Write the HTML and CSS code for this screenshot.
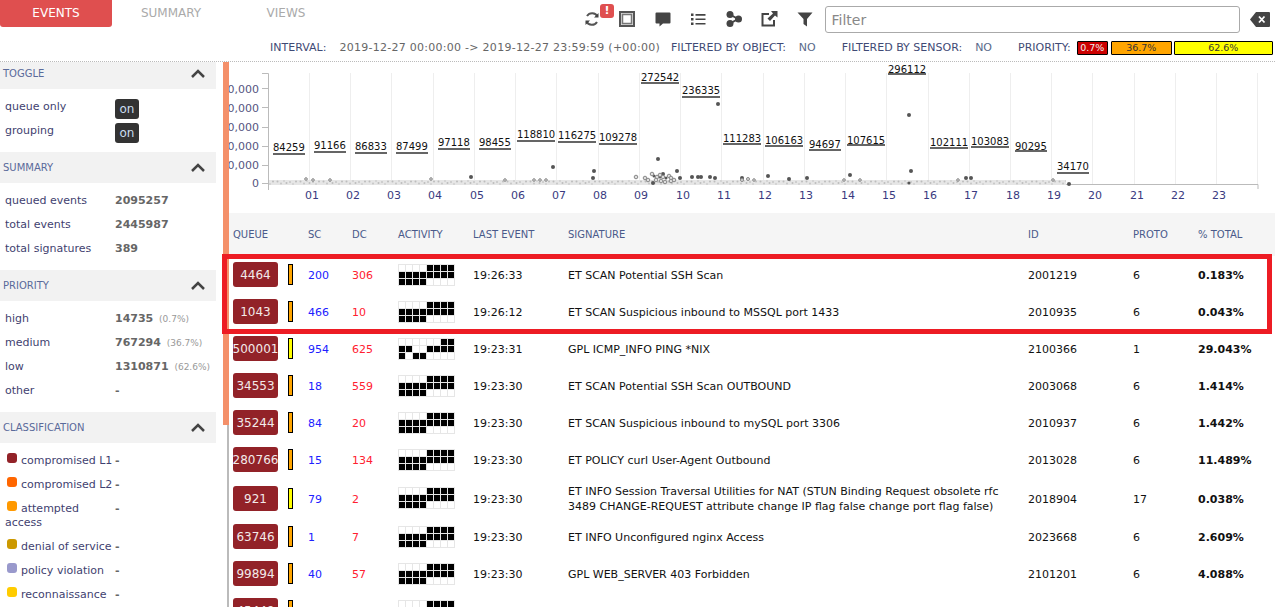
FILE: index.html
```html
<!DOCTYPE html>
<html lang="en">
<head>
<meta charset="utf-8">
<title>Events</title>
<link rel="stylesheet" href="styles.css">
</head>
<body>
<svg class="defs" aria-hidden="true">
  <defs>
    <symbol id="act-a" viewBox="0 0 57 22">
      <rect class="act-bg" width="57" height="22"/>
      <path class="act-empty" d="M1 4H57M1 11H57M1 18H57"/>
      <path class="act-full" d="M29 4H57M1 11H57M1 18H29"/>
    </symbol>
    <symbol id="act-b" viewBox="0 0 57 22">
      <rect class="act-bg" width="57" height="22"/>
      <path class="act-empty" d="M1 4H57M1 11H57M1 18H57"/>
      <path class="act-full" d="M43 4H57M1 11H15M29 11H57M1 18H8M15 18H29"/>
    </symbol>
    <pattern id="noise" width="23" height="5" patternUnits="userSpaceOnUse">
      <rect width="23" height="5" fill="#e6e6e6"/>
      <circle cx="1.500" cy="1.500" r="1" fill="#bdbdbd"/>
      <circle cx="5" cy="3.500" r="1" fill="#c6c6c6"/>
      <circle cx="8" cy="1" r="1" fill="#d0d0d0"/>
      <circle cx="10.500" cy="3" r="1" fill="#bdbdbd"/>
      <circle cx="14" cy="2" r="1" fill="#c6c6c6"/>
      <circle cx="17" cy="4" r="1" fill="#d0d0d0"/>
      <circle cx="20" cy="1.500" r="1" fill="#bdbdbd"/>
    </pattern>
  </defs>
</svg>
<div class="app">
  <header class="top">
    <div class="bar">
      <nav class="tabs">
        <a class="tab tab-active">EVENTS</a>
        <a class="tab tab-summary">SUMMARY</a>
        <a class="tab">VIEWS</a>
      </nav>
      <div class="tools">
        <span class="tool tool-badged">
          <svg class="ico" viewBox="0 0 18 18"><path class="ico-line" d="M14.500 6.500A6 6 0 0 0 4 6M3.500 11.500A6 6 0 0 0 14 12"/><path class="ico-fill" d="M15.500 3v4.500H11zM2.500 15v-4.500H7z"/></svg>
          <span class="alert">!</span>
        </span>
        <span class="tool"><svg class="ico" viewBox="0 0 18 18"><rect class="ico-frame" x="2" y="2" width="14" height="14"/><rect class="ico-frame-in" x="4.500" y="4.500" width="9" height="9"/></svg></span>
        <span class="tool"><svg class="ico" viewBox="0 0 18 18"><path class="ico-fill" d="M2.500 2.500h13a1 1 0 0 1 1 1v9a1 1 0 0 1-1 1H9l-3.500 3v-3H2.500a1 1 0 0 1-1-1v-9a1 1 0 0 1 1-1z"/></svg></span>
        <span class="tool"><svg class="ico" viewBox="0 0 18 18"><path class="ico-fill" d="M2 3.500h2.500v2.500H2zM2 8h2.500v2.500H2zM2 12.500h2.500V15H2zM6.500 4h10v1.700h-10zM6.500 8.400h10v1.700h-10zM6.500 12.900h10v1.700h-10z"/></svg></span>
        <span class="tool"><svg class="ico" viewBox="0 0 18 18"><path class="ico-bold" d="M5 4.500L13 9L5 13.500"/><circle class="ico-fill" cx="5" cy="4.500" r="3.500"/><circle class="ico-fill" cx="5" cy="13.500" r="3.500"/><circle class="ico-fill" cx="13.500" cy="9" r="3.500"/></svg></span>
        <span class="tool"><svg class="ico" viewBox="0 0 18 18"><path class="ico-bold" d="M9 4H2.500v11.500H14V10"/><path class="ico-fill" d="M11 1h6.500v6.500L15 5.500l-5 5.500-2.500-2.500L13 3.500z"/></svg></span>
        <span class="tool"><svg class="ico" viewBox="0 0 18 18"><path class="ico-fill" d="M1.500 2.500h15L11 9v7.500L7.500 14V9z"/></svg></span>
      </div>
      <input class="filter" type="text" placeholder="Filter">
      <svg class="clear" viewBox="0 0 20 15"><path class="clear-body" d="M6 0h13a1 1 0 0 1 1 1v13a1 1 0 0 1-1 1H6L0 7.500z"/><path class="clear-x" d="M9 4.500l5.500 6M14.500 4.500l-5.500 6"/></svg>
    </div>
    <div class="info">
      <span class="info-key">INTERVAL:</span>
      <span class="info-val">2019-12-27 00:00:00 -&gt; 2019-12-27 23:59:59 (+00:00)</span>
      <span class="info-key">FILTERED BY OBJECT:</span>
      <span class="info-no">NO</span>
      <span class="info-key">FILTERED BY SENSOR:</span>
      <span class="info-no">NO</span>
      <span class="info-key info-prio">PRIORITY:</span>
      <span class="prio prio-high">0.7%</span>
      <span class="prio prio-med">36.7%</span>
      <span class="prio prio-low">62.6%</span>
    </div>
  </header>

  <div class="main">
    <aside class="side">
      <section class="panel">
        <h3 class="panel-head panel-head-first">TOGGLE<svg class="chev" viewBox="0 0 14 9"><path d="M1 8L7 2L13 8"/></svg></h3>
        <div class="row row-switch"><span class="lab">queue only</span><span class="switch">on</span></div>
        <div class="row row-switch"><span class="lab">grouping</span><span class="switch">on</span></div>
      </section>
      <section class="panel">
        <h3 class="panel-head">SUMMARY<svg class="chev" viewBox="0 0 14 9"><path d="M1 8L7 2L13 8"/></svg></h3>
        <div class="row"><span class="lab">queued events</span><span class="val">2095257</span></div>
        <div class="row"><span class="lab">total events</span><span class="val">2445987</span></div>
        <div class="row"><span class="lab">total signatures</span><span class="val">389</span></div>
      </section>
      <section class="panel">
        <h3 class="panel-head">PRIORITY<svg class="chev" viewBox="0 0 14 9"><path d="M1 8L7 2L13 8"/></svg></h3>
        <div class="row"><span class="lab">high</span><span class="val">14735 <small class="pct">(0.7%)</small></span></div>
        <div class="row"><span class="lab">medium</span><span class="val">767294 <small class="pct">(36.7%)</small></span></div>
        <div class="row"><span class="lab">low</span><span class="val">1310871 <small class="pct">(62.6%)</small></span></div>
        <div class="row"><span class="lab">other</span><span class="val">-</span></div>
      </section>
      <section class="panel">
        <h3 class="panel-head">CLASSIFICATION<svg class="chev" viewBox="0 0 14 9"><path d="M1 8L7 2L13 8"/></svg></h3>
        <div class="row"><span class="lab"><i class="dot c1"></i>compromised L1</span><span class="val">-</span></div>
        <div class="row"><span class="lab"><i class="dot c2"></i>compromised L2</span><span class="val">-</span></div>
        <div class="row"><span class="lab"><i class="dot c3"></i>attempted access</span><span class="val">-</span></div>
        <div class="row"><span class="lab"><i class="dot c4"></i>denial of service</span><span class="val">-</span></div>
        <div class="row"><span class="lab"><i class="dot c5"></i>policy violation</span><span class="val">-</span></div>
        <div class="row"><span class="lab"><i class="dot c6"></i>reconnaissance</span><span class="val">-</span></div>
      </section>
    </aside>

    <div class="content">
      <div class="thumb"></div>
      <svg class="chart" viewBox="229 62 1046 151">
        <g class="grid">
          <path d="M309.500 73V184M350.500 73V184M391.500 73V184M433.500 73V184M474.500 73V184M515.500 73V184M556.500 73V184M598.500 73V184M639.500 73V184M680.500 73V184M721.500 73V184M763.500 73V184M804.500 73V184M845.500 73V184M886.500 73V184M928.500 73V184M969.500 73V184M1010.500 73V184M1051.500 73V184M1092.500 73V184M1134.500 73V184M1175.500 73V184M1216.500 73V184M1257.500 73V184"/>
        </g>
        <path class="axis" d="M262 73.500H268.500V190M262 88.500H268M262 107.500H268M262 127.500H268M262 146.500H268M262 165.500H268M262 183.500H268M268 184.500H1258V189"/>
        <g class="ytick">
          <text x="259" y="93">250,000</text>
          <text x="259" y="112">200,000</text>
          <text x="259" y="131">150,000</text>
          <text x="259" y="150">100,000</text>
          <text x="259" y="169">50,000</text>
          <text x="259" y="187">0</text>
        </g>
        <g class="xtick">
          <text x="305" y="199">01</text><text x="346" y="199">02</text><text x="387" y="199">03</text><text x="428" y="199">04</text><text x="470" y="199">05</text><text x="511" y="199">06</text><text x="552" y="199">07</text><text x="593" y="199">08</text><text x="634" y="199">09</text><text x="676" y="199">10</text><text x="717" y="199">11</text><text x="758" y="199">12</text><text x="799" y="199">13</text><text x="841" y="199">14</text><text x="882" y="199">15</text><text x="923" y="199">16</text><text x="964" y="199">17</text><text x="1006" y="199">18</text><text x="1047" y="199">19</text><text x="1088" y="199">20</text><text x="1130" y="199">21</text><text x="1171" y="199">22</text><text x="1212" y="199">23</text>
        </g>
        <rect class="noise" x="269" y="180" width="797" height="5"/>
        <g class="pts">
          <circle cx="471" cy="177" r="2"/><circle cx="553" cy="167" r="2"/><circle cx="594" cy="171" r="2"/><circle cx="593" cy="178" r="2"/><circle cx="658" cy="159" r="2"/><circle cx="718" cy="104" r="2"/><circle cx="677" cy="171" r="2"/><circle cx="680" cy="178" r="2"/><circle cx="909" cy="115" r="2"/><circle cx="911" cy="171" r="2"/><circle cx="768" cy="176" r="2"/><circle cx="789" cy="179" r="2"/><circle cx="807" cy="178" r="2"/><circle cx="850" cy="175" r="2"/><circle cx="1069" cy="184" r="2"/><circle cx="966" cy="178" r="2"/><circle cx="971" cy="178" r="2"/><circle cx="692" cy="177" r="2"/><circle cx="698" cy="177" r="2"/><circle cx="701" cy="177" r="2"/><circle cx="710" cy="177" r="2"/><circle cx="715" cy="178" r="2"/><circle cx="742" cy="178" r="2"/><circle cx="909" cy="183" r="1.500"/>
          <circle cx="653" cy="183" r="2"/><circle cx="663" cy="174" r="2"/><circle cx="654" cy="176" r="1.500"/><circle cx="660" cy="177" r="1.500"/><circle cx="666" cy="178" r="1.500"/>
        </g>
        <g class="pts-open">
          <circle cx="636" cy="177" r="1.800"/><circle cx="645" cy="178" r="1.800"/><circle cx="652" cy="174" r="1.800"/><circle cx="657" cy="177" r="1.800"/><circle cx="660" cy="175" r="1.800"/><circle cx="663" cy="177" r="1.800"/><circle cx="669" cy="176" r="1.800"/><circle cx="671" cy="178" r="1.800"/><circle cx="656" cy="180" r="1.800"/><circle cx="661" cy="181" r="1.800"/><circle cx="665" cy="182" r="1.800"/><circle cx="671" cy="181" r="1.800"/><circle cx="674" cy="180" r="1.800"/><circle cx="648" cy="180" r="1.800"/><circle cx="742" cy="180" r="1.500"/><circle cx="748" cy="179" r="1.500"/><circle cx="313" cy="180" r="1.300"/><circle cx="306" cy="179" r="1.300"/><circle cx="505" cy="180" r="1.300"/><circle cx="431" cy="179" r="1.300"/><circle cx="1053" cy="180" r="1.300"/><circle cx="844" cy="180" r="1.300"/><circle cx="330" cy="180" r="1.300"/><circle cx="534" cy="180" r="1.300"/><circle cx="540" cy="180" r="1.300"/><circle cx="546" cy="180" r="1.300"/><circle cx="754" cy="180" r="1.300"/><circle cx="958" cy="180" r="1.300"/><circle cx="860" cy="180" r="1.300"/>
        </g>
        <g class="lbl">
          <text x="273" y="151">84259</text><text x="314" y="149">91166</text><text x="355" y="150">86833</text><text x="396" y="150">87499</text><text x="438" y="146">97118</text><text x="479" y="146">98455</text><text x="517" y="138">118810</text><text x="558" y="139">116275</text><text x="599" y="141">109278</text><text x="641" y="81">272542</text><text x="682" y="94">236335</text><text x="723" y="142">111283</text><text x="765" y="144">106163</text><text x="809" y="148">94697</text><text x="847" y="144">107615</text><text x="888" y="73">296112</text><text x="930" y="146">102111</text><text x="971" y="145">103083</text><text x="1015" y="150">90295</text><text x="1057" y="170">34170</text>
        </g>
        <path class="lbl-line" d="M273 154h32M517 141h38M314 152h32M355 153h32M396 153h32M438 149h32M479 149h32M558 142h38M641 83h38M682 97h38M723 144h38M765 146h38M809 150h32M847 145h38M888 74h38M930 148h38M971 147h38M1015 151h32M1057 173h32M599 144h38"/>
      </svg>

      <div class="tbl-head cols">
        <span class="cell-first">QUEUE</span><span></span><span>SC</span><span>DC</span><span>ACTIVITY</span><span>LAST EVENT</span><span>SIGNATURE</span><span>ID</span><span>PROTO</span><span>% TOTAL</span>
      </div>

      <div class="tr cols">
        <span class="cell-first"><b class="queue">4464</b></span><i class="sev sev-med"></i><span class="sc">200</span><span class="dc">306</span><svg class="act"><use href="#act-a"/></svg><span>19:26:33</span><span class="sig">ET SCAN Potential SSH Scan</span><span>2001219</span><span>6</span><strong>0.183%</strong>
      </div>
      <div class="tr cols">
        <span class="cell-first"><b class="queue">1043</b></span><i class="sev sev-med"></i><span class="sc">466</span><span class="dc">10</span><svg class="act"><use href="#act-a"/></svg><span>19:26:12</span><span class="sig">ET SCAN Suspicious inbound to MSSQL port 1433</span><span>2010935</span><span>6</span><strong>0.043%</strong>
      </div>
      <div class="tr cols">
        <span class="cell-first"><b class="queue">500001</b></span><i class="sev sev-low"></i><span class="sc">954</span><span class="dc">625</span><svg class="act"><use href="#act-b"/></svg><span>19:23:31</span><span class="sig">GPL ICMP_INFO PING *NIX</span><span>2100366</span><span>1</span><strong>29.043%</strong>
      </div>
      <div class="tr cols">
        <span class="cell-first"><b class="queue">34553</b></span><i class="sev sev-med"></i><span class="sc">18</span><span class="dc">559</span><svg class="act"><use href="#act-a"/></svg><span>19:23:30</span><span class="sig">ET SCAN Potential SSH Scan OUTBOUND</span><span>2003068</span><span>6</span><strong>1.414%</strong>
      </div>
      <div class="tr cols">
        <span class="cell-first"><b class="queue">35244</b></span><i class="sev sev-med"></i><span class="sc">84</span><span class="dc">20</span><svg class="act"><use href="#act-a"/></svg><span>19:23:30</span><span class="sig">ET SCAN Suspicious inbound to mySQL port 3306</span><span>2010937</span><span>6</span><strong>1.442%</strong>
      </div>
      <div class="tr cols">
        <span class="cell-first"><b class="queue">280766</b></span><i class="sev sev-med"></i><span class="sc">15</span><span class="dc">134</span><svg class="act"><use href="#act-a"/></svg><span>19:23:30</span><span class="sig">ET POLICY curl User-Agent Outbound</span><span>2013028</span><span>6</span><strong>11.489%</strong>
      </div>
      <div class="tr cols">
        <span class="cell-first"><b class="queue">921</b></span><i class="sev sev-low"></i><span class="sc">79</span><span class="dc">2</span><svg class="act"><use href="#act-a"/></svg><span>19:23:30</span><span class="sig">ET INFO Session Traversal Utilities for NAT (STUN Binding Request obsolete rfc 3489 CHANGE-REQUEST attribute change IP flag false change port flag false)</span><span>2018904</span><span>17</span><strong>0.038%</strong>
      </div>
      <div class="tr cols">
        <span class="cell-first"><b class="queue">63746</b></span><i class="sev sev-med"></i><span class="sc">1</span><span class="dc">7</span><svg class="act"><use href="#act-a"/></svg><span>19:23:30</span><span class="sig">ET INFO Unconfigured nginx Access</span><span>2023668</span><span>6</span><strong>2.609%</strong>
      </div>
      <div class="tr cols">
        <span class="cell-first"><b class="queue">99894</b></span><i class="sev sev-med"></i><span class="sc">40</span><span class="dc">57</span><svg class="act"><use href="#act-a"/></svg><span>19:23:30</span><span class="sig">GPL WEB_SERVER 403 Forbidden</span><span>2101201</span><span>6</span><strong>4.088%</strong>
      </div>
      <div class="tr cols">
        <span class="cell-first"><b class="queue">45449</b></span><i class="sev sev-med"></i><span></span><span></span><svg class="act"><use href="#act-a"/></svg>
      </div>
    </div>
  </div>
  <div class="highlight"></div>
</div>
</body>
</html>
```
FILE: styles.css
```css
* { box-sizing: border-box; }
html, body { margin: 0; height: 100%; overflow: hidden; background: #fff; }
body { font: 11px/14px "DejaVu Sans", sans-serif; color: #111; }
.app { position: relative; height: 607px; overflow: hidden; }
.defs { position: absolute; width: 0; height: 0; }

/* header */
.top { height: 62px; border-bottom: 1px dotted #bbb; }
.bar { display: flex; align-items: flex-start; height: 34px; }
.tabs { display: flex; width: 342px; }
.tab { width: 112px; height: 27px; line-height: 27px; text-align: center; color: #aaa; font-size: 12px; }
.tab-summary { width: 118px; }
.tab-active { background: #df4f4f; color: #fff; border-radius: 0 0 3px 3px; }
.tools { display: flex; margin-left: 232px; }
.tool { position: relative; width: 35.500px; height: 27px; margin-top: 10px; display: flex; justify-content: center; align-items: flex-start; }
.ico { width: 18px; height: 18px; }
.ico-fill { fill: #444; }
.ico-line { fill: none; stroke: #555; stroke-width: 2; }
.ico-bold { fill: none; stroke: #444; stroke-width: 2; }
.ico-frame { fill: #ddd; stroke: #555; stroke-width: 2; }
.ico-frame-in { fill: #fff; stroke: #777; stroke-width: 1.500; }
.alert { position: absolute; left: 26px; top: -6px; width: 14px; height: 14px; border-radius: 3px; background: #df4f4f; color: #fff; font-weight: 700; font-size: 11px; line-height: 14px; text-align: center; }
.filter { width: 415px; height: 27px; margin: 6px 0 0 2px; padding: 0 6px; border: 1px solid #aaa; border-radius: 3px; font: 14px "DejaVu Sans", sans-serif; background: #fff; }
.filter::placeholder { color: #888; opacity: 1; }
.clear { width: 20px; height: 15px; margin: 12px 0 0 10px; }
.clear-body { fill: #444; }
.clear-x { fill: none; stroke: #fff; stroke-width: 1.800; }

.info { display: flex; align-items: center; height: 27px; padding-left: 270px; font-size: 11px; white-space: nowrap; }
.info-key { color: #3f4a75; }
.info-val { color: #666; margin: 0 11px 0 13px; letter-spacing: .27px; }
.info-no { color: #5a6a8a; margin: 0 26px 0 13px; }
.info-prio { margin-right: 6px; }
.prio { height: 14px; line-height: 12px; border: 1px solid #000; border-radius: 1px; text-align: center; color: #333; font-size: 9.500px; }
.prio-high { width: 31px; margin-right: 3px; background: #c00; color: #eee; }
.prio-med { width: 61px; margin-right: 2px; background: #ffa500; }
.prio-low { width: 99px; background: #ff0; }

/* layout */
.main { display: flex; }
.side { width: 216px; flex: none; color: #3f3f70; }
.content { position: relative; margin-left: 11px; width: 1048px; border-left: 2px solid #bbb; }
.thumb { position: absolute; left: -6px; top: 0; width: 6px; height: 363px; background: #f4906a; }

/* sidebar */
.panel { margin-bottom: 10px; }
.panel-head { display: flex; justify-content: space-between; align-items: center; height: 31px; margin: 0 0 5px; padding: 0 11px 0 3px; background: #f2f2f2; font-weight: 400; font-size: 10px; color: #5a6a9a; }
.panel-head-first { height: 27px; padding-bottom: 4px; }
.chev { width: 14px; height: 9px; }
.chev path { fill: none; stroke: #444; stroke-width: 2.500; }
.row { display: grid; grid-template-columns: 110px 1fr; min-height: 24px; padding: 6px 0 4px 5px; }
.row-switch { height: 24px; }
.lab { display: block; }
.val { font-weight: 700; color: #666; white-space: nowrap; }
.pct { font-weight: 400; font-size: 9px; color: #999; margin-left: 2px; }
.switch { justify-self: start; width: 24px; height: 20px; margin-top: -1px; line-height: 20px; border-radius: 3px; background: #333; color: #cde; font-size: 12px; text-align: center; }
.dot { display: inline-block; width: 10px; height: 10px; margin: -1px 4px 0 2px; border-radius: 3px; vertical-align: top; }
.c1 { background: #922228; }
.c2 { background: #ff6600; }
.c3 { background: #ff9900; }
.c4 { background: #cc9900; }
.c5 { background: #9999cc; }
.c6 { background: #ffcc00; }

/* chart */
.chart { display: block; width: 1046px; height: 151px; }
.grid path { fill: none; stroke: #eee; stroke-width: 1; }
.axis { fill: none; stroke: #bbb; stroke-width: 1; }
.ytick text { font-size: 11px; fill: #555580; text-anchor: end; }
.xtick text { font-size: 11px; fill: #3a3a80; }
.noise { fill: url(#noise); }
.pts circle { fill: #555; }
.pts-open circle { fill: #ddd; stroke: #888; stroke-width: 1; }
.lbl text { font-size: 10px; fill: #111; }
.lbl-line { fill: none; stroke: #333; stroke-width: 1.500; }

/* table */
.cols { display: grid; grid-template-columns: 59px 20px 44px 46px 75px 95px 460px 105px 65px 77px; align-items: center; }
.tbl-head { height: 43px; background: #f5f5f5; font-size: 10px; color: #4a5a8a; }
.cell-first { padding-left: 4px; }
.tr { min-height: 37px; padding: 4px 0; line-height: 15px; }
.tr > span:not(.cell-first), .tr > strong { padding-top: 2px; }
.queue { display: flex; justify-content: center; width: 45px; height: 25px; line-height: 26px; border-radius: 3px; background: #922228; color: #f2eaea; font-weight: 400; font-size: 12px; white-space: nowrap; }
.sev { display: block; width: 5px; height: 21px; border: 1px solid #000; }
.sev-med { background: #ffa500; }
.sev-low { background: #ff0; }
.sc { color: #2020ff; }
.dc { color: #ff2030; }
.act { display: block; width: 57px; height: 22px; }
.act-bg { fill: #e6e6e6; }
.act-empty, .act-full { fill: none; stroke-width: 6; stroke-dasharray: 6 1; }
.act-empty { stroke: #fff; }
.act-full { stroke: #000; }
.sig { padding-right: 28px; }

.highlight { position: absolute; left: 222px; top: 254px; width: 1050px; height: 80px; border: 5px solid #ed1c24; }
```
